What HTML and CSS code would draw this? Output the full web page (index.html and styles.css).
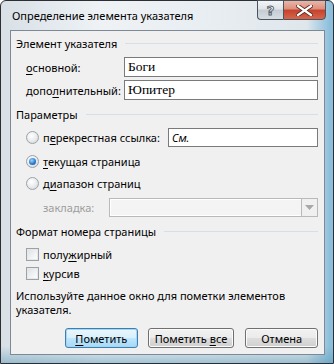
FILE: index.html
```html
<!DOCTYPE html>
<html lang="ru">
<head>
<meta charset="utf-8">
<title>Определение элемента указателя</title>
<link rel="stylesheet" href="styles.css">
</head>
<body>
<div class="window">
  <div class="titlebar">
    <div class="title">Определение элемента указателя</div>
    <div class="caption-btns">
      <div class="cbtn help"><span>?</span></div>
      <div class="cbtn close">
        <svg width="17" height="11" viewBox="0 0 17 11">
          <path d="M2 1 L15 10 M15 1 L2 10" stroke="#5a2a22" stroke-width="4" stroke-linecap="square"/>
          <path d="M2 1 L15 10 M15 1 L2 10" stroke="#ffffff" stroke-width="2.2" stroke-linecap="square"/>
        </svg>
      </div>
    </div>
  </div>
  <div class="client">
    <div class="group-head h1"><span>Элемент указателя</span><i class="rule"></i></div>
    <div class="row r-main">
      <label class="lbl"><u>о</u>сновной:</label>
      <div class="field serif wide">Боги</div>
    </div>
    <div class="row r-sub">
      <label class="lbl">допо<u>л</u>нительный:</label>
      <div class="field serif wide">Юпитер</div>
    </div>

    <div class="group-head h2"><span>Параметры</span><i class="rule"></i></div>
    <div class="row r-cross">
      <span class="radio"></span>
      <label class="opt">п<u>е</u>рекрестная ссылка:</label>
      <div class="field italic see">См.</div>
    </div>
    <div class="row r-cur">
      <span class="radio on"></span>
      <label class="opt"><u>т</u>екущая страница</label>
    </div>
    <div class="row r-range">
      <span class="radio"></span>
      <label class="opt">д<u>и</u>апазон страниц</label>
    </div>
    <div class="row r-mark">
      <label class="lbl-dis">закладка:</label>
      <div class="combo">
        <div class="combo-text"></div>
        <div class="combo-btn">
          <svg width="9" height="5" viewBox="0 0 9 5"><path d="M0 0 H9 L4.5 5 Z" fill="#a8a8a8"/></svg>
        </div>
      </div>
    </div>

    <div class="group-head h3"><span>Формат номера страницы</span><i class="rule"></i></div>
    <div class="row r-bold">
      <span class="check"></span>
      <label class="opt">полу<u>ж</u>ирный</label>
    </div>
    <div class="row r-ital">
      <span class="check"></span>
      <label class="opt"><u>к</u>урсив</label>
    </div>

    <p class="hint">Используйте данное окно для пометки элементов указателя.</p>

    <div class="buttons">
      <button class="btn default"><u>П</u>ометить</button>
      <button class="btn">Пометить <u>в</u>се</button>
      <button class="btn">Отмена</button>
    </div>
  </div>
</div>
</body>
</html>
```
FILE: styles.css
```css
* { box-sizing: border-box; }
html, body {
  margin: 0;
  padding: 0;
  width: 334px;
  height: 364px;
  overflow: hidden;
  background: #ffffff;
}
body {
  font-family: "Noto Sans", "Open Sans", sans-serif;
  font-size: 11px;
  color: #000;
}
u { text-decoration: underline; text-underline-offset: 2px; }
label, span, .title { white-space: nowrap; }

.window {
  width: 334px;
  height: 364px;
  border: 1px solid #2b2f33;
  border-radius: 6px 6px 0 0;
  background:
    linear-gradient(180deg, rgba(255,255,255,0) 0, rgba(255,255,255,0) 345px, rgba(90,150,180,0.55) 364px),
    linear-gradient(90deg, #d8e0e6 0, #eef2f5 30%, #e9eef2 60%, #dfe7ec 92%, #8dbfdc 99%);
  display: flex;
  flex-direction: column;
}

.titlebar {
  height: 29px;
  display: flex;
  align-items: flex-start;
}
.title {
  padding: 7px 0 0 11px;
  font-size: 11px;
  color: #000;
  line-height: 16px;
}
.caption-btns {
  margin-left: auto;
  margin-right: 7px;
  margin-top: -1px;
  display: flex;
}
.cbtn {
  height: 20px;
  border: 1px solid #4b545c;
  display: flex;
  align-items: center;
  justify-content: center;
}
.help {
  width: 26px;
  border-radius: 0 0 0 4px;
  border-right: none;
  background: linear-gradient(180deg, #f3f5f7 0, #dfe4e8 45%, #c4ccd3 50%, #d6dde3 100%);
}
.help span {
  font-family: "DejaVu Sans", sans-serif;
  font-weight: bold;
  font-size: 13px;
  color: #fff;
  -webkit-text-stroke: 1px #55606a;
  line-height: 1;
}
.close {
  width: 43px;
  border-radius: 0 0 4px 0;
  background: linear-gradient(180deg, #eab6a8 0, #dc8e7c 45%, #c6412b 50%, #d6654e 100%);
}

.client {
  margin: 0 8px 8px 9px;
  flex: 1;
  border: 1px solid #7d8a95;
  background: #f0f0f0;
  padding: 5px 6px 0 5px;
  display: flex;
  flex-direction: column;
}

.group-head {
  display: flex;
  align-items: center;
  height: 15px;
  line-height: 15px;
}
.group-head .rule {
  flex: 1;
  height: 1px;
  background: #d5dfe5;
  margin-left: 8px;
}
.h2 { margin-top: 7px; }
.h3 { margin-top: 7px; }

.row {
  display: flex;
  align-items: center;
}
.lbl { padding-left: 10px; flex: 1; }
.r-main { height: 20px; margin-top: 6px; }
.r-sub { height: 20px; margin-top: 3px; }
.r-cross { height: 19px; margin-top: 6px; }
.r-cur { height: 22px; margin-top: 3px; }
.r-range { height: 22px; }
.r-mark { height: 19px; margin-top: 4px; }
.r-bold { height: 19px; margin-top: 6px; }
.r-ital { height: 19px; }

.field {
  height: 100%;
  border: 1px solid #7a7a7a;
  background: #fff;
  padding: 0 3px;
  display: flex;
  align-items: center;
  flex: none;
}
.wide { width: 194px; }
.serif {
  font-family: "Liberation Serif", serif;
  font-size: 13.5px;
}
.italic { font-style: italic; font-size: 11px; }
.see { width: 150px; margin-left: auto; }

.radio {
  width: 13px;
  height: 13px;
  margin-left: 10px;
  border-radius: 50%;
  border: 1px solid #9aa2a8;
  background: radial-gradient(circle at 40% 35%, #ffffff 0, #eceeef 45%, #cfd3d6 100%);
  flex: none;
  position: relative;
}
.radio.on::after {
  content: "";
  position: absolute;
  left: 2px;
  top: 2px;
  width: 7px;
  height: 7px;
  border-radius: 50%;
  background: radial-gradient(circle at 40% 35%, #9fd5ff 0, #2a7dcf 55%, #1a4f8e 100%);
}
.opt { padding-left: 4px; }

.lbl-dis {
  color: #9c9c9c;
  padding-left: 27px;
  width: 94px;
}
.combo {
  margin-left: auto;
  width: 213px;
  height: 100%;
  border: 1px solid #b9b9b9;
  display: flex;
  background: #f4f4f4;
  box-shadow: inset 0 0 0 1px #ffffff;
}
.combo-text { flex: 1; }
.combo-btn {
  width: 16px;
  border-left: 1px solid #b9b9b9;
  background: #f0f0f0;
  display: flex;
  align-items: center;
  justify-content: center;
}

.check {
  width: 13px;
  height: 13px;
  margin-left: 10px;
  border: 1px solid #9aa2a8;
  background: linear-gradient(135deg, #dcdfe2 0, #f2f3f4 60%, #ffffff 100%);
  box-shadow: inset 0 0 0 1px #e6e8ea;
  flex: none;
}

.hint {
  margin: 6px 0 0 0;
  line-height: 14px;
}

.buttons {
  display: flex;
  margin-top: 11px;
  padding-left: 49px;
  gap: 10px;
}
.btn {
  font-family: inherit;
  font-size: 11px;
  height: 20px;
  padding: 0;
  border: 1px solid #707070;
  border-radius: 3px;
  background: linear-gradient(180deg, #f2f2f2 0, #ebebeb 48%, #dddddd 52%, #cfcfcf 100%);
  box-shadow: inset 0 0 0 1px #fbfbfb;
  color: #000;
  white-space: nowrap;
}
.btn:nth-child(1) { width: 73px; }
.btn:nth-child(2) { width: 87px; }
.btn:nth-child(3) { width: 73px; margin-left: 1px; }
.btn.default {
  border-color: #3c7fb1;
  box-shadow: inset 0 0 0 1px #a7d6f2;
  background: linear-gradient(180deg, #eaf6fd 0, #d9f0fc 48%, #bee6fd 52%, #a7d9f5 100%);
}
```
